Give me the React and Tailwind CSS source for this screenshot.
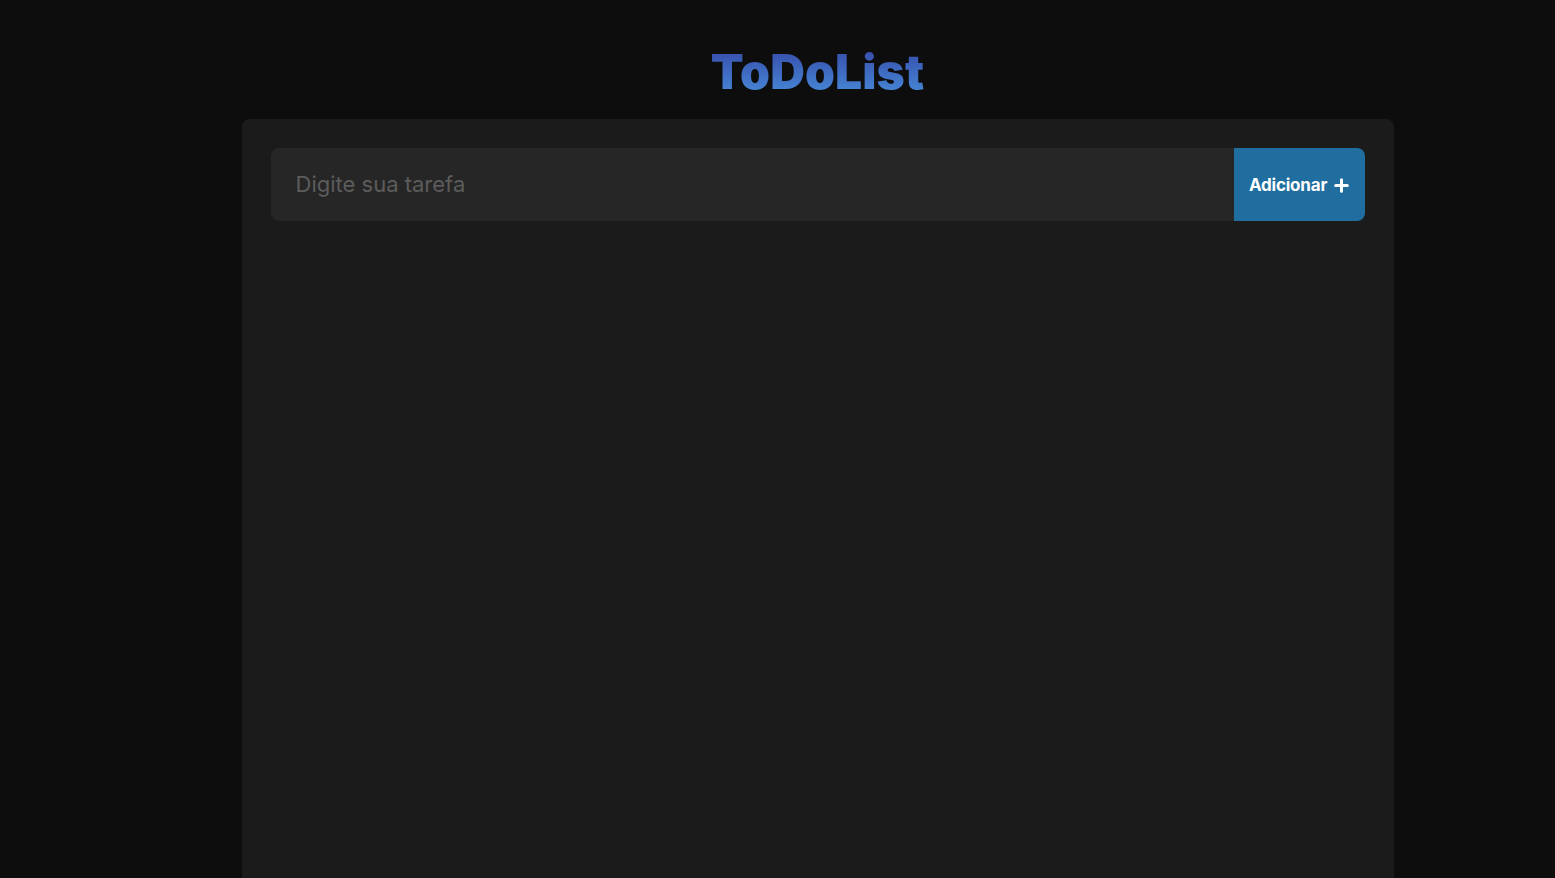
import React from 'react'

export default function App(){
  return (
    <div className="min-h-screen bg-[#0d0d0d] overflow-hidden pl-[80px]" style={{fontFamily: 'Inter, "Noto Sans", sans-serif'}}>
      <div className="flex flex-col items-center pt-[42px]">
        <h1 className="text-[48px] leading-[60px] font-black tracking-[0.1px] bg-gradient-to-b from-[#3444a4] to-[#4a92de] bg-clip-text text-transparent">
          ToDoList
        </h1>
        <div className="mt-[17px] w-[1152px] min-h-[800px] bg-[#1b1b1b] rounded-lg p-[29px]">
          <div className="flex h-[73px] rounded-lg overflow-hidden">
            <input
              className="flex-1 bg-[#262626] px-[25px] text-[22px] text-gray-200 placeholder-[#5c5c5c] outline-none"
              placeholder="Digite sua tarefa"
            />
            <button className="w-[131px] pt-[2px] bg-[#1f6e9f] text-white font-bold text-[17px] tracking-[-0.2px] flex items-center justify-center gap-[7px]">
              Adicionar
              <svg width="15" height="15" viewBox="0 0 16 16" fill="none" stroke="currentColor" strokeWidth="3.2" strokeLinecap="round">
                <path d="M8 1.8v12.4M1.8 8h12.4" />
              </svg>
            </button>
          </div>
        </div>
      </div>
    </div>
  )
}
